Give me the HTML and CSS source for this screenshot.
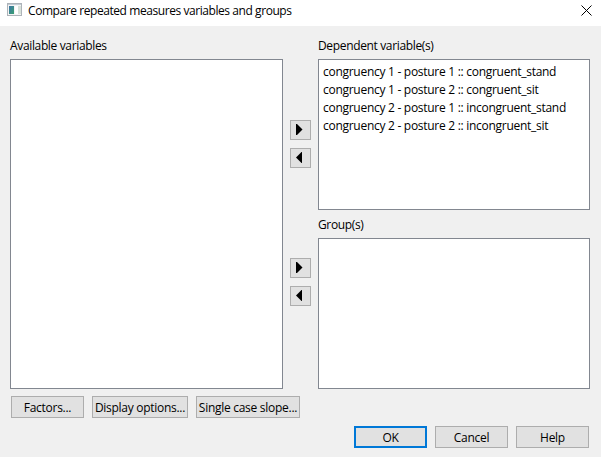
FILE: index.html
```html
<!DOCTYPE html>
<html lang="en"><head><meta charset="utf-8"><title>Compare repeated measures variables and groups</title><link rel="stylesheet" href="styles.css"></head>
<body>
<header class="titlebar">
<svg class="app-icon" width="16" height="17" viewBox="0 0 16 17"><defs><linearGradient id="pane" x2="1" y2="1"><stop stop-color="#3e74a8"/><stop offset="1" stop-color="#38a070"/></linearGradient></defs><rect x="0.5" y="1.5" width="14" height="12" fill="#f4f4f4" stroke="#adb3b9"/><path d="M1 2.5h13" stroke="#c3ccd4"/><rect x="2" y="4" width="5" height="8" fill="url(#pane)"/><rect x="8" y="4" width="3" height="8" fill="#fff"/><rect x="11" y="4" width="3" height="8" fill="#d8e2da"/></svg>
<h1 class="title">Compare repeated measures variables and groups</h1>
<svg class="close" width="11" height="11" viewBox="0 0 11 11"><path d="M.5.5l10 10M10.5.5l-10 10" stroke="#000" fill="none"/></svg>
</header>
<main class="content">
<section class="available"><h2 class="label">Available variables</h2><div class="list"></div></section>
<div class="movers">
<div class="pair"><button class="move"><svg width="8" height="12" viewBox="0 0 8 12"><path d="M0 0h1l5.5 5.5L1 11H0z"/></svg></button><button class="move"><svg width="8" height="12" viewBox="0 0 8 12"><path d="M6 0H5.500L0 5.500 5.500 11H6z"/></svg></button></div>
<div class="pair"><button class="move"><svg width="8" height="12" viewBox="0 0 8 12"><path d="M0 0h1l5.5 5.5L1 11H0z"/></svg></button><button class="move"><svg width="8" height="12" viewBox="0 0 8 12"><path d="M6 0H5.500L0 5.500 5.500 11H6z"/></svg></button></div>
</div>
<section class="selected"><h2 class="label">Dependent variable(s)</h2>
<ul class="list dependent"><li>congruency 1 - posture 1 :: congruent_stand</li><li>congruency 1 - posture 2 :: congruent_sit</li><li>congruency 2 - posture 1 :: incongruent_stand</li><li>congruency 2 - posture 2 :: incongruent_sit</li></ul>
<h2 class="label">Group(s)</h2><div class="list"></div></section>
</main>
<div class="options"><button class="factors">Factors...</button><button class="display">Display options...</button><button class="slope">Single case slope...</button></div>
<footer class="actions"><button class="ok">OK</button><button>Cancel</button><button>Help</button></footer>
</body></html>
```
FILE: styles.css
```css
*{box-sizing:border-box}
body{margin:0;width:601px;height:457px;background:#f0f0f0;color:#000;font:12px/18px "Open Sans",sans-serif;letter-spacing:-.28px;overflow:hidden}
h1,h2,ul{margin:0;padding:0;font-size:12px;font-weight:400;list-style:none}
.titlebar{height:26px;background:#fff;display:flex;align-items:flex-start;padding:2px 9px 0 7px}
.title{margin-left:5px;flex:1;line-height:18px;letter-spacing:-.43px}
.close{margin-top:3px}
.content{display:flex;height:363px;padding-left:10px}
.available{width:273px;display:flex;flex-direction:column;padding-top:11px}
.label{height:22px;line-height:18px;letter-spacing:-.35px}
.list{background:#fff;border:1px solid #828790;flex:1}
.movers{width:35px;padding:94px 7px 0;display:flex;flex-direction:column;gap:90px}
.pair{display:flex;flex-direction:column;gap:8px}
button{font:inherit;letter-spacing:inherit;color:inherit;background:#e1e1e1;border:1px solid #adadad;padding:1px 0 0;height:22px;white-space:nowrap}
.move{width:21px;height:20px;display:flex;align-items:center;justify-content:flex-start;padding:0 0 0 5px}
.selected{width:272px;padding-top:11px;display:flex;flex-direction:column}
.dependent{flex:none;height:151px;padding:3px 0 0 4px;margin-bottom:6px}
.options{display:flex;gap:8px;padding:7px 0 0 11px}
.factors{width:73px}.display{width:96px}.slope{width:104px}
.actions{display:flex;justify-content:flex-end;gap:8px;padding:8px 12px 0 0}
.actions button{width:73px}
.actions .ok{border:2px solid #0078d7}
```
